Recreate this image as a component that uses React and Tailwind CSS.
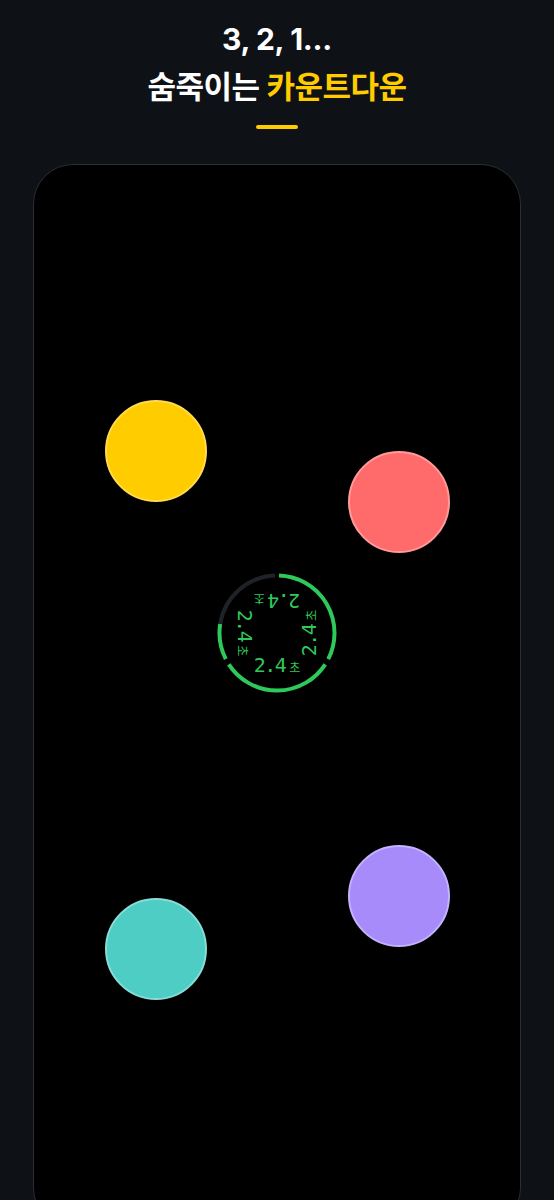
import React from "react";

const toXY = (deg, r) => {
  const a = ((deg - 90) * Math.PI) / 180;
  return [60 + r * Math.cos(a), 60 + r * Math.sin(a)];
};

const arc = (start, end, r = 57.5) => {
  const [x1, y1] = toXY(start, r);
  const [x2, y2] = toXY(end, r);
  const large = end - start > 180 ? 1 : 0;
  return `M ${x1} ${y1} A ${r} ${r} 0 ${large} 1 ${x2} ${y2}`;
};

const circles = [
  { pos: "left-[71px] top-[235px]", color: "bg-[#ffcc00] border-[#ffdb4d]" },
  { pos: "left-[314px] top-[286px]", color: "bg-[#ff6b6b] border-[#ff9a9a]" },
  { pos: "left-[314px] top-[680px]", color: "bg-[#a78bfa] border-[#c4b2fc]" },
  { pos: "left-[71px] top-[733px]", color: "bg-[#4ecdc4] border-[#86ddd7]" },
];

const Label = ({ rotate }) => (
  <div className={`absolute inset-0 flex items-center justify-center ${rotate}`}>
    <div className="translate-y-[32px] flex items-baseline text-[#2fc85a] font-['DejaVu_Sans_Mono','Noto_Sans_CJK_KR',monospace]">
      <span className="text-[20px] leading-none tracking-[-1.5px]">2.4</span>
      <span className="text-[12px] leading-none ml-[4px] font-['Noto_Sans_CJK_KR',sans-serif]">초</span>
    </div>
  </div>
);

const Timer = () => (
  <div className="absolute left-[183px] top-[408px] w-[120px] h-[120px]">
    <svg width="120" height="120" viewBox="0 0 120 120" className="absolute inset-0">
      <path d={arc(279, 358)} stroke="#1f2228" strokeWidth="4" fill="none" />
      <path d={arc(2, 117)} stroke="#2fc85a" strokeWidth="4" fill="none" />
      <path d={arc(123, 237)} stroke="#2fc85a" strokeWidth="4" fill="none" />
      <path d={arc(243, 279)} stroke="#2fc85a" strokeWidth="4" fill="none" />
    </svg>
    <Label rotate="rotate-0" />
    <Label rotate="rotate-90" />
    <Label rotate="rotate-180" />
    <Label rotate="rotate-270" />
  </div>
);

export default function App() {
  return (
    <div className="h-[1200px] overflow-hidden bg-[#0e1116] flex flex-col items-center font-['Inter','Noto_Sans_CJK_KR',sans-serif]">
      <h1 className="shrink-0 pt-[15px] text-center text-white font-bold leading-[48px]">
        <div className="text-[30px] tracking-[-0.3px]">3, 2, 1...</div>
        <div className="text-[31px] tracking-[-0.5px]">
          숨죽이는 <span className="text-[#ffcc00]">카운트다운</span>
        </div>
      </h1>
      <div className="shrink-0 mt-[14px] w-[42px] h-[4px] rounded-full bg-[#ffcc00]" />

      <div className="relative mt-[35px] shrink-0 w-[488px] h-[1064px] rounded-[40px] border border-[#2a2d33] bg-black">
        {circles.map((c, i) => (
          <div key={i} className={`absolute w-[102px] h-[102px] rounded-full border-2 ${c.pos} ${c.color}`} />
        ))}
        <Timer />
      </div>
    </div>
  );
}
